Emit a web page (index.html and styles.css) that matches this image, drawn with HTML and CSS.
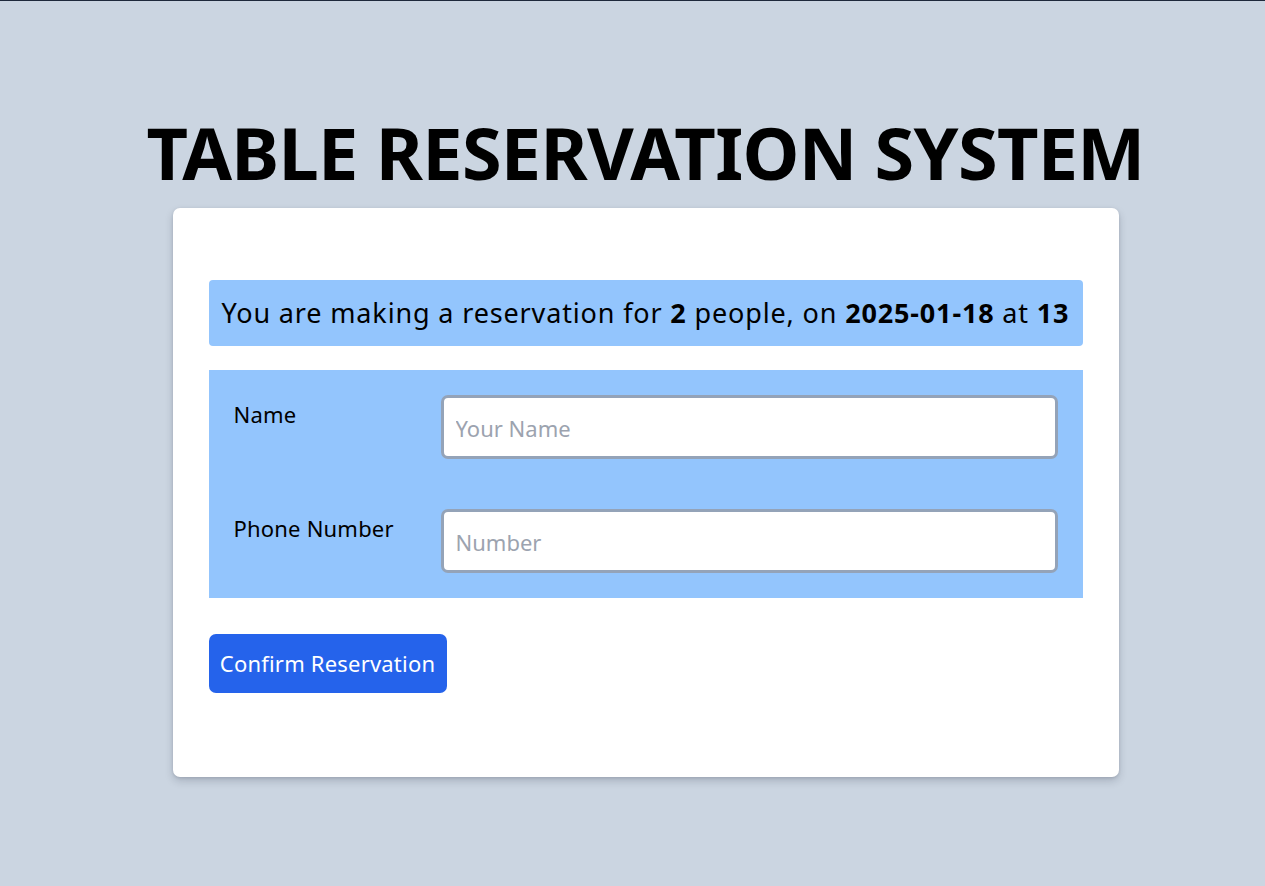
FILE: index.html
```html
<!DOCTYPE html>
<html>
<head>
<meta charset="utf-8">
<link rel="stylesheet" href="styles.css">
</head>
<body>
<main class="page">
  <h1 class="title">TABLE RESERVATION SYSTEM</h1>
  <section class="card">
    <div class="summary">You are making a reservation for <b>2</b> people, on <b>2025-01-18</b> at <b>13</b></div>
    <form class="form">
      <div class="row">
        <label class="label" for="name">Name</label>
        <input class="input" id="name" type="text" placeholder="Your Name">
      </div>
      <div class="row">
        <label class="label" for="phone">Phone Number</label>
        <input class="input" id="phone" type="text" placeholder="Number">
      </div>
    </form>
    <button class="btn" type="button">Confirm Reservation</button>
  </section>
</main>
</body>
</html>
```
FILE: styles.css
```css
html, body {
  margin: 0;
  padding: 0;
}
body {
  background: #cbd5e1;
  border-top: 1px solid #1e293b;
  font-family: "Noto Sans", "Open Sans", sans-serif;
  color: #000;
  min-height: 885px;
}
.page {
  display: flex;
  flex-direction: column;
  align-items: center;
  padding-left: 26px;
  padding-top: 95px;
}
.title {
  margin: 0;
  font-size: 72px;
  font-weight: 700;
  line-height: 112px;
  letter-spacing: -0.7px;
}
.card {
  width: 946px;
  box-sizing: border-box;
  background: #fff;
  border-radius: 7px;
  box-shadow: 0 4px 8px rgba(15, 23, 42, 0.18), 0 1px 3px rgba(15, 23, 42, 0.12);
  padding: 72px 36px 84px;
  display: flex;
  flex-direction: column;
  align-items: flex-start;
}
.summary {
  align-self: stretch;
  background: #93c5fd;
  border-radius: 4px;
  height: 66px;
  box-sizing: border-box;
  padding: 0 0 2px 13px;
  display: flex;
  align-items: center;
  font-size: 27px;
  letter-spacing: 0.85px;
  white-space: pre;
}
.summary b { font-weight: 700; }
.form {
  align-self: stretch;
  margin: 24px 0 0;
  background: #93c5fd;
  padding: 25px;
  display: flex;
  flex-direction: column;
  gap: 50px;
}
.row {
  display: flex;
  align-items: flex-start;
}
.label {
  width: 207px;
  flex: none;
  font-size: 22px;
  line-height: 28px;
  letter-spacing: 0.2px;
  padding-top: 5px;
}
.input {
  flex: 1;
  margin: 0;
  height: 64px;
  box-sizing: border-box;
  border: 3px solid #94a3b8;
  border-radius: 7px;
  background: #fff;
  font-family: inherit;
  font-size: 22px;
  padding: 2px 12px 0;
  outline: none;
}
.input::placeholder { color: #9ca3af; }
.btn {
  margin: 36px 0 0;
  height: 59px;
  width: 238px;
  border: none;
  border-radius: 7px;
  background: #2563eb;
  color: #fff;
  font-family: inherit;
  font-size: 22px;
  letter-spacing: 0.2px;
  padding: 0 0 2px;
}
```
